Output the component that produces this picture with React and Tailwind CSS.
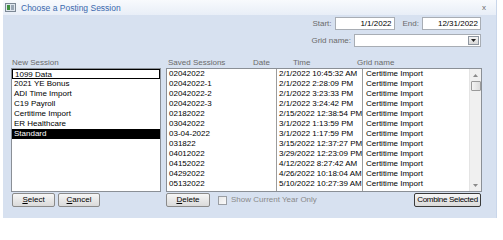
const sessions = [
  ["02042022", "2/1/2022 10:45:32 AM"],
  ["02042022-1", "2/1/2022 2:28:09 PM"],
  ["02042022-2", "2/1/2022 3:23:33 PM"],
  ["02042022-3", "2/1/2022 3:24:42 PM"],
  ["02182022", "2/15/2022 12:38:54 PM"],
  ["03042022", "3/1/2022 1:13:59 PM"],
  ["03-04-2022", "3/1/2022 1:17:59 PM"],
  ["031822", "3/15/2022 12:37:27 PM"],
  ["04012022", "3/29/2022 12:23:09 PM"],
  ["04152022", "4/12/2022 8:27:42 AM"],
  ["04292022", "4/26/2022 10:18:04 AM"],
  ["05132022", "5/10/2022 10:27:39 AM"],
  ["05272022", "5/24/2022 9:45:03 AM"],
]

const newSessions = ["1099 Data", "2021 YE Bonus", "ADI Time Import", "C19 Payroll", "Certitime Import", "ER Healthcare", "Standard"]

const Btn = ({ children, w, strong }) => (
  <button className={`${w} h-[14px] rounded-[2px] border ${strong ? "border-[#3a3a3a] tracking-[-0.3px]" : "border-[#8a8a8a]"} bg-gradient-to-b from-[#f6f6f6] to-[#dadada] text-[8px] leading-none text-black whitespace-nowrap overflow-hidden`}>
    {children}
  </button>
)

const App = () => {
  return (
    <div className="w-[503px] h-[226px] bg-white font-['Liberation_Sans',Arial,sans-serif] text-[8px] leading-[10px] text-black">
      <div className="ml-[3px] w-[494px] h-[218px] flex flex-col border-r border-[#c9d6ea]">

        {/* title bar */}
        <div className="h-[15px] flex items-center bg-gradient-to-b from-[#f8fafd] to-[#e8eef7] pl-[2px] pr-[10px]">
          <div className="w-[11px] h-[9px] border border-[#7b8794] bg-[#dfe6ee] flex items-end p-[1px] gap-[1px]">
            <div className="w-[3px] h-[5px] bg-[#3f8f3f]"></div>
            <div className="w-[4px] h-[5px] bg-[#9aa7b5]"></div>
          </div>
          <span className="ml-[5px] text-[8.5px] text-[#3a68ad]">Choose a Posting Session</span>
          <span className="ml-auto text-[8px] text-[#6b6b6b]">x</span>
        </div>

        {/* body */}
        <div className="flex-1 bg-[#d7e1f0] flex flex-col">
          <div className="h-[43px] flex flex-col items-end pr-[15px] pt-[2px] gap-[4px] text-[#6a6a6a]">
            <div className="flex items-center h-[13px]">
              <span className="mr-[3px]">Start:</span>
              <div className="w-[60px] h-[13px] border border-[#a8adb4] bg-white text-black text-right pr-[2px] leading-[11px]">1/1/2022</div>
              <span className="ml-[8px] mr-[3px]">End:</span>
              <div className="w-[59px] h-[13px] border border-[#a8adb4] bg-white text-black text-right pr-[2px] leading-[11px]">12/31/2022</div>
            </div>
            <div className="flex items-center h-[13px]">
              <span className="mr-[3px]">Grid name:</span>
              <div className="w-[127px] h-[13px] border border-[#a8adb4] bg-white flex justify-end p-[1px]">
                <div className="w-[11px] h-full border border-[#8e96a0] bg-gradient-to-b from-[#f4f4f4] to-[#d8d8d8] flex items-center justify-center">
                  <svg width="5" height="3" viewBox="0 0 5 3"><path d="M0 0h5L2.5 3z" fill="#222" /></svg>
                </div>
              </div>
            </div>
          </div>

          <div className="flex pl-[8px] gap-[5px]">
            {/* new session */}
            <div className="w-[150px] flex flex-col">
              <div className="h-[10px] text-[#6a6a6a] pl-[1px]">New Session</div>
              <div className="h-[124px] border border-[#8a8f96] bg-white">
                {newSessions.map((s, i) => (
                  <div key={s} className={`h-[10px] pl-[2px] leading-[9px] ${i === 0 ? "border border-black pl-[1px]" : ""} ${s === "Standard" ? "bg-black text-white" : ""}`}>{s}</div>
                ))}
              </div>
              <div className="flex gap-[3px] mt-[1px] pl-[1px]">
                <Btn w="w-[43px]"><u>S</u>elect</Btn>
                <Btn w="w-[42px]"><u>C</u>ancel</Btn>
              </div>
            </div>

            {/* saved sessions */}
            <div className="w-[316px] flex flex-col">
              <div className="h-[10px] flex text-[#6a6a6a] pl-[2px]">
                <span className="w-[85px]">Saved Sessions</span>
                <span className="w-[40px]">Date</span>
                <span className="w-[64px]">Time</span>
                <span>Grid name</span>
              </div>
              <div className="h-[124px] border border-[#8a8f96] bg-white flex overflow-hidden">
                <div className="flex-1 overflow-hidden">
                  {sessions.map(([name, time]) => (
                    <div key={name} className="h-[10px] flex leading-[10px]">
                      <span className="w-[110px] pl-[2px] border-r border-[#9c9c9c]">{name}</span>
                      <span className="w-[86px] pl-[2px] border-r border-[#9c9c9c] whitespace-nowrap">{time}</span>
                      <span className="pl-[3px] whitespace-nowrap">Certitime Import</span>
                    </div>
                  ))}
                </div>
                <div className="w-[12px] bg-[#f0f0f0] border-l border-[#e4e4e4] flex flex-col items-center">
                  <div className="h-[12px] flex items-center justify-center">
                    <svg width="5" height="3" viewBox="0 0 5 3"><path d="M0 3h5L2.5 0z" fill="#8a8a8a" /></svg>
                  </div>
                  <div className="w-[10px] h-[10px] rounded-[1px] border border-[#9a9a9a] bg-gradient-to-r from-[#f4f4f4] to-[#dcdcdc]"></div>
                  <div className="mt-auto h-[12px] flex items-center justify-center">
                    <svg width="5" height="3" viewBox="0 0 5 3"><path d="M0 0h5L2.5 3z" fill="#8a8a8a" /></svg>
                  </div>
                </div>
              </div>
              <div className="flex items-center mt-[1px]">
                <Btn w="w-[44px]"><u>D</u>elete</Btn>
                <div className="ml-[8px] w-[9px] h-[9px] border border-[#9a9ea4] bg-gradient-to-br from-[#e8e8e8] to-[#fafafa]"></div>
                <span className="ml-[4px] text-[#8a8a8a]">Show Current Year Only</span>
                <div className="ml-auto mr-[1px] flex">
                  <Btn w="w-[67px]" strong>Combine Selected</Btn>
                </div>
              </div>
            </div>
          </div>
        </div>
      </div>
    </div>
  )
}

export default App
